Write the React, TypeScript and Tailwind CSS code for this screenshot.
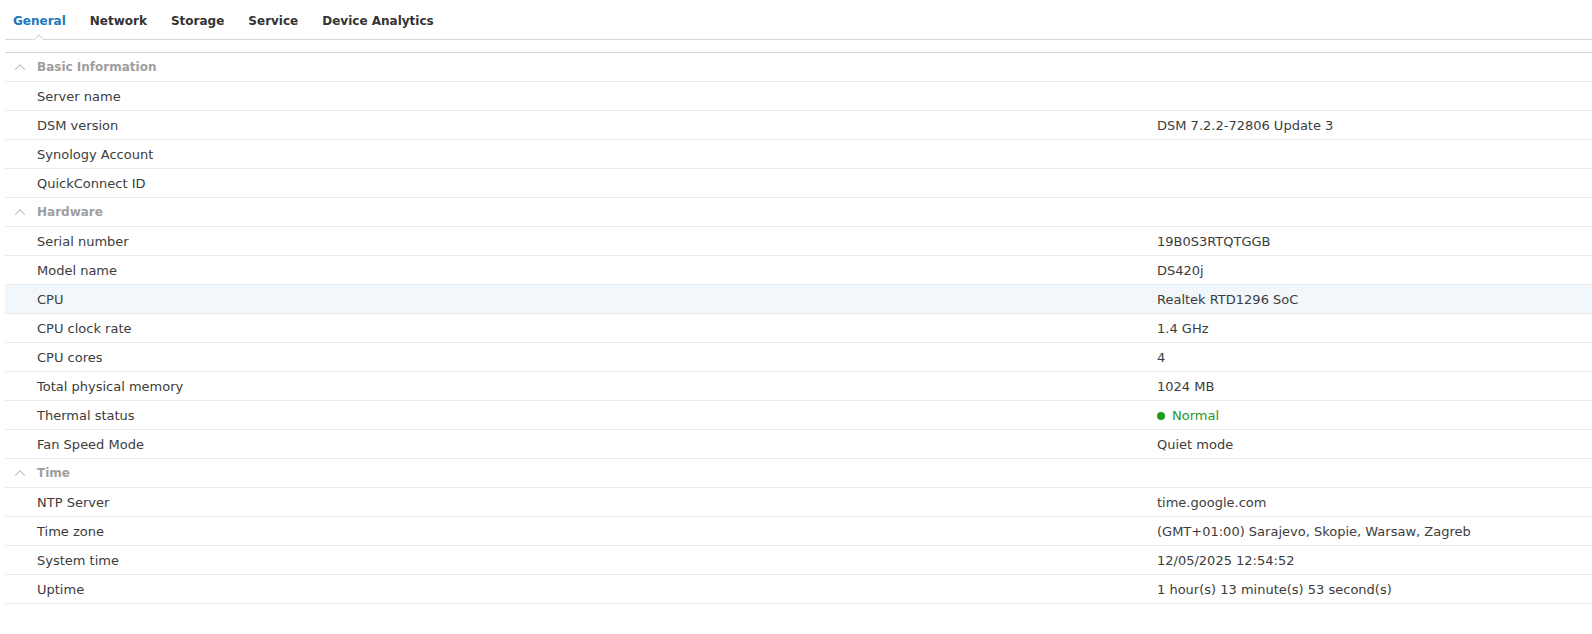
import React from "react";
import { ChevronUp } from "lucide-react";

const tabs = ["General", "Network", "Storage", "Service", "Device Analytics"];

type Row = { label: string; value?: string; status?: boolean; hover?: boolean };

const sections: { title: string; rows: Row[] }[] = [
  {
    title: "Basic Information",
    rows: [
      { label: "Server name" },
      { label: "DSM version", value: "DSM 7.2.2-72806 Update 3" },
      { label: "Synology Account" },
      { label: "QuickConnect ID" },
    ],
  },
  {
    title: "Hardware",
    rows: [
      { label: "Serial number", value: "19B0S3RTQTGGB" },
      { label: "Model name", value: "DS420j" },
      { label: "CPU", value: "Realtek RTD1296 SoC", hover: true },
      { label: "CPU clock rate", value: "1.4 GHz" },
      { label: "CPU cores", value: "4" },
      { label: "Total physical memory", value: "1024 MB" },
      { label: "Thermal status", value: "Normal", status: true },
      { label: "Fan Speed Mode", value: "Quiet mode" },
    ],
  },
  {
    title: "Time",
    rows: [
      { label: "NTP Server", value: "time.google.com" },
      { label: "Time zone", value: "(GMT+01:00) Sarajevo, Skopie, Warsaw, Zagreb" },
      { label: "System time", value: "12/05/2025 12:54:52" },
      { label: "Uptime", value: "1 hour(s) 13 minute(s) 53 second(s)" },
    ],
  },
];

function InfoRow({ row }: { row: Row }) {
  return (
    <div
      className={`flex h-[29px] items-center border-b border-[#ebebeb] pt-[1px] text-[13px] text-[#3c3c3c] ${
        row.hover ? "bg-[#f2f7fb]" : ""
      }`}
    >
      <div className="w-[1152px] shrink-0 pl-8">{row.label}</div>
      {row.status ? (
        <div className="flex items-center gap-[7px] text-[#1f9a1f]">
          <span className="h-[8px] w-[8px] rounded-full bg-[#1f9a1f]" />
          {row.value}
        </div>
      ) : (
        <div>{row.value}</div>
      )}
    </div>
  );
}

export default function App() {
  return (
    <div
      className="h-[634px] w-full overflow-hidden bg-white"
      style={{ fontFamily: '"DejaVu Sans", Verdana, sans-serif' }}
    >
      <div className="ml-[5px]">
        {/* Tab bar */}
        <div className="flex h-[40px] items-center gap-6 border-b border-[#d6d6d6] pl-[8px] pt-[3px]">
          {tabs.map((tab, i) => (
            <div
              key={tab}
              className={`relative flex h-full items-center text-[12px] font-bold ${
                i === 0 ? "text-[#1a79bd]" : "text-[#333333]"
              }`}
            >
              {tab}
              {i === 0 && (
                <span className="absolute bottom-[-5px] left-1/2 h-[8px] w-[8px] -translate-x-1/2 rotate-45 border-l border-t border-[#d6d6d6] bg-white" />
              )}
            </div>
          ))}
        </div>

        {/* Info table */}
        <div className="mt-[12px] border-t border-[#d6d6d6]">
          {sections.map((section) => (
            <div key={section.title}>
              <div className="flex h-[29px] items-center border-b border-[#ebebeb]">
                <div className="flex w-[32px] justify-start pl-[6px]">
                  <ChevronUp size={18} strokeWidth={1.4} className="text-[#b0b0b0]" />
                </div>
                <span className="text-[12px] font-bold text-[#9e9e9e]">{section.title}</span>
              </div>
              {section.rows.map((row) => (
                <InfoRow key={row.label} row={row} />
              ))}
            </div>
          ))}
        </div>
      </div>
    </div>
  );
}
